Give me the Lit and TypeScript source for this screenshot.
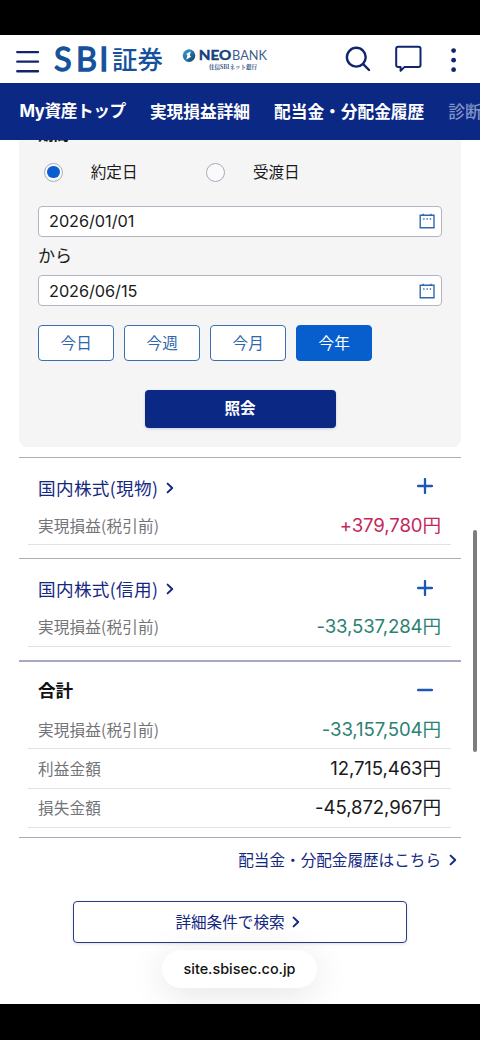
import { LitElement, html, css, svg } from "lit";
import { customElement, property } from "lit/decorators.js";
import { classMap } from "lit/directives/class-map.js";

type Row = { label: string; value: string; tone: "gain" | "loss" | "plain" };

const chevron = html`<svg width="8" height="12" viewBox="0 0 8 12" fill="none" stroke="#14287f" stroke-width="2" stroke-linecap="round" stroke-linejoin="round"><path d="M1.6 1.6 6.2 6 1.6 10.4"/></svg>`;

@customElement("site-header")
export class SiteHeader extends LitElement {
  static styles = css`
    :host { display: block; height: 48px; background: #fff; }
    svg { display: block; }
    .logo { font-family: "Noto Sans CJK JP", sans-serif; font-weight: 500; }
    .latin { font-family: "Lato", sans-serif; }
    .mini { font-family: "Noto Serif CJK JP", "Noto Sans CJK JP", sans-serif; font-weight: 700; }
  `;
  render() {
    return html`<svg width="480" height="48" viewBox="0 35 480 48">
      <defs>
        <linearGradient id="orb" x1="0" y1="0" x2="1" y2="1">
          <stop offset="0" stop-color="#39a9d8"/><stop offset="1" stop-color="#12386f"/>
        </linearGradient>
      </defs>
      <g stroke="#10246f" stroke-width="2.4" stroke-linecap="round" fill="none">
        <path d="M17.3 52.1H38M17.3 61.6H38M17.3 71.2H38"/>
        <circle cx="356.3" cy="57.2" r="9.4"/>
        <path d="M363.2 64.2 369 70"/>
      </g>
      <path d="M398.2 46.8h20.3a2 2 0 0 1 2 2v16.1a2 2 0 0 1-2 2h-13.9l-4 3.9v-3.9h-2.4a2 2 0 0 1-2-2V48.8a2 2 0 0 1 2-2z" fill="none" stroke="#10246f" stroke-width="2" stroke-linejoin="round"/>
      <g fill="#10246f"><circle cx="453.6" cy="50.6" r="2.4"/><circle cx="453.6" cy="60.2" r="2.4"/><circle cx="453.6" cy="69.7" r="2.4"/></g>
      <g class="logo" fill="#15529b">
        <text class="latin" x="54 76 99.2" y="70.6" font-size="32.5" font-weight="400" stroke="#15529b" stroke-width="1.3">SBI</text>
        <text x="112" y="69" font-size="25.5" textLength="51" lengthAdjust="spacingAndGlyphs">証券</text>
      </g>
      <circle cx="189" cy="55.6" r="6.3" fill="url(#orb)"/>
      <path d="M190.8 51.2 186.2 54l1.2 1.2-1.2 4.5 4.8-3-1.2-1.4z" fill="#fff"/>
      <g class="latin">
        <text x="198.8" y="60" font-size="12.6" font-weight="700" fill="#17427a" stroke="#17427a" stroke-width=".4" textLength="32.5" lengthAdjust="spacingAndGlyphs">NEO</text>
        <text x="232" y="60" font-size="12.6" font-weight="400" fill="#3f5f8c" textLength="35" lengthAdjust="spacingAndGlyphs">BANK</text>
      </g>
      <text class="mini" x="209" y="68.8" font-size="6.2" fill="#2b4a7c" textLength="48" lengthAdjust="spacingAndGlyphs">住信SBIネット銀行</text>
    </svg>`;
  }
}

@customElement("date-field")
export class DateField extends LitElement {
  @property() value = "";
  static styles = css`
    :host { display: flex; align-items: center; justify-content: space-between; box-sizing: border-box; width: 404px; height: 31px;
      border: 1px solid #b2b5c2; border-bottom-width: 1.5px; border-radius: 4px; background: #fff; padding: 0 6px 0 10px;
      font: 400 16.3px/30px "Inter", sans-serif; letter-spacing: -0.05px; color: #1a1a1c; }
  `;
  render() {
    return html`<span>${this.value}</span>
      <svg width="16" height="16" viewBox="0 0 16 16" fill="none" stroke="#2f67ad" stroke-width="1.4">
        <path d="M1.2 2.3h13.8v12.4H1.2zM4.2 .8v2M12 .8v2"/>
        <path d="M4.2 6h1.3M7.5 6h1.3M10.8 6h1.3" stroke-width="1.4"/>
      </svg>`;
  }
}

@customElement("result-block")
export class ResultBlock extends LitElement {
  @property() heading = "";
  @property({ type: Boolean }) total = false;
  @property({ attribute: false }) rows: Row[] = [];
  static styles = css`
    :host { display: block; }
    .head { display: flex; align-items: center; height: 48.5px; padding: 12px 28px 0 19px; box-sizing: border-box; }
    .title { font-size: 17.6px; line-height: 26px; letter-spacing: 0.36px; color: #14287f; margin-right: 8px; }
    .total { color: #111; font-weight: 700; letter-spacing: 0; margin-top: -3px; }
    .toggle { margin-left: auto; margin-top: -3px; }
    .head svg { display: block; }
    .row { display: flex; align-items: center; justify-content: space-between; box-sizing: border-box; height: 39.4px;
      margin: 0 10px 0 9px; padding: 0 10px 1px; border-bottom: 1px solid #e2e2e5; }
    .label { font-size: 15.6px; line-height: 24px; letter-spacing: 0.15px; color: #737478; }
    .value { font: 400 18.6px/24px "Inter", "Noto Sans CJK JP", sans-serif; letter-spacing: -0.1px; }
    .gain { color: #c4285a; }
    .loss { color: #2c8272; }
    .plain { color: #1a1a1c; }
  `;
  render() {
    return html`
      <div class="head">
        <span class=${classMap({ title: true, total: this.total })}>${this.heading}</span>
        ${this.total ? "" : chevron}
        <svg class="toggle" width="16" height="16" viewBox="0 0 16 16" stroke="#1c58b5" stroke-width="2.3" stroke-linecap="round">
          <path d="M1.1 8h13.8"/>${this.total ? "" : svg`<path d="M8 1.1v13.8"/>`}
        </svg>
      </div>
      ${this.rows.map((r) => html`<div class="row"><span class="label">${r.label}</span><span class="value ${r.tone}">${r.value}</span></div>`)}
    `;
  }
}

@customElement("app-root")
export class AppRoot extends LitElement {
  static styles = css`
    :host { display: block; width: 480px; height: 1040px; overflow: hidden; background: #000; position: relative;
      font-family: "Noto Sans CJK JP", sans-serif; color: #1a1a1c; white-space: nowrap; }
    .screen { margin-top: 35px; height: 969px; background: #fff; overflow: hidden; position: relative; display: flow-root; }
    .nav { display: flex; gap: 24px; height: 57px; padding-left: 19.5px; box-sizing: border-box; background: #0b2885; color: #fff;
      font-size: 16.7px; font-weight: 700; line-height: 56px; overflow: hidden; }
    .nav .my { font-family: "Inter", "Noto Sans CJK JP", sans-serif; letter-spacing: -0.4px; }
    .nav .faded { color: #8394c5; font-weight: 500; }
    .panel { margin: 0 19px; height: 306.5px; box-sizing: border-box; padding: 0 19px; background: #f5f5f6; border-radius: 0 0 8px 8px; overflow: hidden; }
    .cut { height: 18px; line-height: 24px; font-size: 15.6px; font-weight: 700; margin-top: -19px; }
    .radios { display: flex; height: 28px; margin-top: 19px; align-items: center; font-size: 15.6px; line-height: 24px; }
    .choice { display: flex; align-items: center; width: 162.2px; gap: 27.7px; padding-left: 6px; box-sizing: border-box; }
    .choice b { font-weight: 400; margin-top: -2px; }
    .dot { width: 19px; height: 19px; box-sizing: border-box; border: 1px solid #a9abbb; border-radius: 50%; background: #fafafa; display: grid; place-items: center; }
    .dot.on::after { content: ""; width: 12.5px; height: 12.5px; border-radius: 50%; background: #0a5fd0; }
    .first { margin-top: 19.5px; }
    .from { height: 38.5px; line-height: 36px; font-size: 17px; }
    .quick { display: flex; gap: 9.6px; margin-top: 19px; }
    .chip { width: 76.4px; height: 36px; box-sizing: border-box; border: 1.2px solid #3c6fae; border-radius: 4px; background: #fff; color: #2f67ad; text-align: center; font-size: 15.6px; line-height: 32px; }
    .chip.on { background: #075fcd; border-color: #075fcd; color: #fff; }
    .submit { margin: 28.5px auto 0; width: 191px; height: 38.5px; border-radius: 4px; background: #0b2885; color: #fff; text-align: center; font-size: 15.6px; font-weight: 700; line-height: 35px; box-shadow: 0 1px 3px #0b288530; }
    .results { margin: 10px 19px 0; }
    .item { display: block; border-top: 1px solid #abadb3; height: 100.5px; }
    .item.sum { border-top: 2px solid #a6a9c2; height: 175.5px; }
    .more { display: flex; align-items: center; justify-content: flex-end; gap: 8px; height: 43px; padding-right: 4px; border-top: 1px solid #a9abbb; font-size: 15.6px; color: #14287f; }
    .more span, .search span { margin-top: -2px; }
    .search { display: flex; align-items: center; justify-content: center; gap: 7px; width: 334.5px; height: 42px; box-sizing: border-box; margin: 20px auto 0; padding: 0 5px 1px 0; border: 1.5px solid #2b3c80; border-radius: 4px; font-size: 15.6px; color: #14287f; box-shadow: 0 1px 3px #14287f26; }
    .url { position: absolute; left: 162px; top: 915px; width: 155px; height: 38px; border-radius: 19px; background: #fff; box-shadow: 0 6px 36px #0000001c; text-align: center; font: 500 14.4px/37px "Inter", sans-serif; color: #111; }
    .bar { position: absolute; left: 473px; top: 495px; width: 3.5px; height: 222px; border-radius: 2px; background: #7d7d7f; }
  `;

  render() {
    const label = "実現損益(税引前)";
    return html`<div class="screen">
      <site-header></site-header>
      <div class="nav"><span class="my">My資産トップ</span><span>実現損益詳細</span><span>配当金・分配金履歴</span><span class="faded">診断</span></div>
      <div class="panel">
        <div class="cut">期間</div>
        <div class="radios">
          <div class="choice"><span class="dot on"></span><b>約定日</b></div>
          <div class="choice"><span class="dot"></span><b>受渡日</b></div>
        </div>
        <date-field class="first" value="2026/01/01"></date-field>
        <div class="from">から</div>
        <date-field value="2026/06/15"></date-field>
        <div class="quick">
          ${["今日", "今週", "今月", "今年"].map((t) => html`<div class=${classMap({ chip: true, on: t === "今年" })}>${t}</div>`)}
        </div>
        <div class="submit">照会</div>
      </div>
      <div class="results">
        <result-block class="item" heading="国内株式(現物)" .rows=${[{ label, value: "+379,780円", tone: "gain" }]}></result-block>
        <result-block class="item" heading="国内株式(信用)" .rows=${[{ label, value: "-33,537,284円", tone: "loss" }]}></result-block>
        <result-block class="item sum" total heading="合計" .rows=${[
          { label, value: "-33,157,504円", tone: "loss" },
          { label: "利益金額", value: "12,715,463円", tone: "plain" },
          { label: "損失金額", value: "-45,872,967円", tone: "plain" },
        ]}></result-block>
        <div class="more"><span>配当金・分配金履歴はこちら</span>${chevron}</div>
      </div>
      <div class="search"><span>詳細条件で検索</span>${chevron}</div>
      <div class="url">site.sbisec.co.jp</div>
      <div class="bar"></div>
    </div>`;
  }
}
